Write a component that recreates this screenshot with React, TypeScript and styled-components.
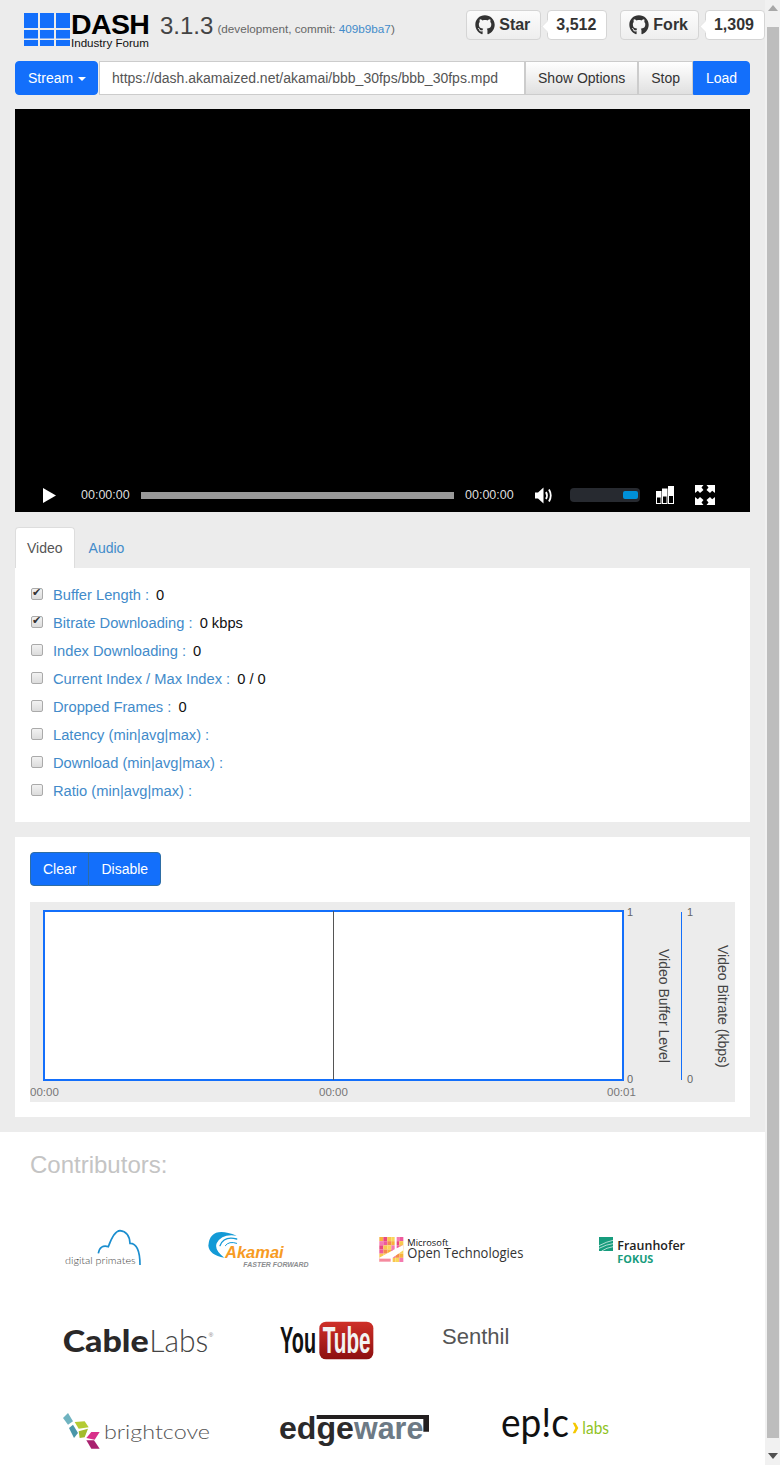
import React from "react";
import styled, { createGlobalStyle } from "styled-components";
import { FaGithub } from "react-icons/fa";

const COLOR_BLUE = "#136ffb";
const COLOR_LINK = "#428bca";
const COLOR_PAGE = "#ececec";

const METRICS = [
  { label: "Buffer Length :", value: "0", checked: true },
  { label: "Bitrate Downloading :", value: "0 kbps", checked: true },
  { label: "Index Downloading :", value: "0", checked: false },
  { label: "Current Index / Max Index :", value: "0 / 0", checked: false },
  { label: "Dropped Frames :", value: "0", checked: false },
  { label: "Latency (min|avg|max) :", value: "", checked: false },
  { label: "Download (min|avg|max) :", value: "", checked: false },
  { label: "Ratio (min|avg|max) :", value: "", checked: false },
];

// colours of the Microsoft mosaic, cells take them in turn
const MOSAIC = ["#f7b23c", "#ee5a9c", "#f9d65b", "#e8487f", "#f58a4e", "#f47ab0", "#f9c64e"];
const MOSAIC_CELLS = Array.from({ length: 36 }, (_, i) => i);

const App = () => {
  return (
    <>
      <GlobalStyle />
      <Screen>
        <Page>
          <Header>
            <LogoMark width="46" height="33" viewBox="0 0 46 33">
              {[0, 16, 32].map((x) => (
                <g key={x} fill={COLOR_BLUE}>
                  <rect x={x} y="0" width="14" height="15" />
                  <rect x={x} y="17" width="14" height="8.5" />
                  <rect x={x} y="27" width="14" height="6" />
                </g>
              ))}
            </LogoMark>
            <LogoText>
              <LogoTitle>DASH</LogoTitle>
              <LogoSub>Industry Forum</LogoSub>
            </LogoText>
            <Version>3.1.3</Version>
            <Commit>
              (development, commit: <a href="#commit">409b9ba7</a>)
            </Commit>
            <GithubGroup>
              <GithubButton>
                <FaGithub size={20} />
                Star
              </GithubButton>
              <GithubCount>3,512</GithubCount>
              <GithubButton $first={false}>
                <FaGithub size={20} />
                Fork
              </GithubButton>
              <GithubCount>1,309</GithubCount>
            </GithubGroup>
          </Header>

          <Toolbar>
            <PrimaryButton $side="left">
              Stream <Caret />
            </PrimaryButton>
            <UrlInput readOnly value="https://dash.akamaized.net/akamai/bbb_30fps/bbb_30fps.mpd" />
            <DefaultButton>Show Options</DefaultButton>
            <DefaultButton>Stop</DefaultButton>
            <PrimaryButton $side="right">Load</PrimaryButton>
          </Toolbar>

          <Video>
            <Controls>
              <PlayIcon width="13" height="15" viewBox="0 0 13 15">
                <path d="M0 0 L13 7.5 L0 15 Z" fill="#fff" />
              </PlayIcon>
              <Time>00:00:00</Time>
              <Seek />
              <Time $right>00:00:00</Time>
              <VolumeIcon width="18" height="17" viewBox="0 0 18 17">
                <path d="M0 5.5 H3 L8.5 0.5 V16.5 L3 11.5 H0 Z" fill="#fff" />
                <path d="M11 5 Q13 8.5 11 12" fill="none" stroke="#fff" strokeWidth="1.8" />
                <path d="M14 2.5 Q17.5 8.5 14 14.5" fill="none" stroke="#fff" strokeWidth="1.8" />
              </VolumeIcon>
              <VolumeTrack>
                <VolumeFill />
              </VolumeTrack>
              <BitrateIcon width="18" height="18" viewBox="0 0 18 18">
                <g fill="#000" stroke="#fff">
                  <rect x="0.5" y="5.5" width="4.5" height="12" />
                  <rect x="6.5" y="3" width="4.5" height="14.5" />
                  <rect x="12.5" y="0.5" width="5" height="17" />
                </g>
                <g fill="#fff">
                  <rect x="0.5" y="5.5" width="4.5" height="6" />
                  <rect x="6.5" y="3" width="4.5" height="7.5" />
                  <rect x="12.5" y="0.5" width="5" height="9.5" />
                </g>
              </BitrateIcon>
              <FullscreenIcon width="20" height="20" viewBox="0 0 20 20">
                <g fill="#fff">
                  <path d="M0 0 H8.5 L6.5 2.5 L8.5 5 L5 8 L2.8 5.8 L0 8 Z" />
                  <path d="M20 0 H11.5 L13.5 2.5 L11.5 5 L15 8 L17.2 5.8 L20 8 Z" />
                  <path d="M0 20 H8.5 L6.5 17.5 L8.5 15 L5 12 L2.8 14.2 L0 12 Z" />
                  <path d="M20 20 H11.5 L13.5 17.5 L11.5 15 L15 12 L17.2 14.2 L20 12 Z" />
                </g>
              </FullscreenIcon>
            </Controls>
          </Video>

          <Tabs>
            <Tab $active>Video</Tab>
            <Tab>Audio</Tab>
          </Tabs>
          <MetricsPanel>
            {METRICS.map((metric) => (
              <MetricRow key={metric.label}>
                <MetricCheck type="checkbox" defaultChecked={metric.checked} />
                <MetricLabel>{metric.label}</MetricLabel>
                {metric.value && <MetricValue>{metric.value}</MetricValue>}
              </MetricRow>
            ))}
          </MetricsPanel>

          <ChartPanel>
            <ButtonGroup>
              <GroupButton>Clear</GroupButton>
              <GroupButton>Disable</GroupButton>
            </ButtonGroup>
            <Chart width="705" height="200" viewBox="0 0 705 200">
              <rect x="14" y="9" width="579" height="169" fill="#fff" stroke={COLOR_BLUE} strokeWidth="2" />
              <line x1="303.5" y1="9" x2="303.5" y2="178" stroke="#555" />
              <line x1="651.5" y1="10" x2="651.5" y2="178" stroke={COLOR_BLUE} />
              <g fill="#666" fontSize="11">
                <text x="597" y="14">1</text>
                <text x="597" y="181">0</text>
                <text x="657" y="14">1</text>
                <text x="657" y="181">0</text>
              </g>
              <g fill="#777" fontSize="11.5">
                <text x="0" y="194">00:00</text>
                <text x="289" y="194">00:00</text>
                <text x="577" y="194">00:01</text>
              </g>
              <g fill="#444" fontSize="14">
                <text transform="translate(629 47) rotate(90)">Video Buffer Level</text>
                <text transform="translate(688 43) rotate(90)">Video Bitrate (kbps)</text>
              </g>
            </Chart>
          </ChartPanel>

          <Contributors>
            <ContributorsTitle>Contributors:</ContributorsTitle>
            <LogoRow $first>
              <LogoFrame $offset={60} width="90" height="47" viewBox="60 39 270 141">
                <path
                  d="M175 115 Q180 88 205 95 Q222 48 240 47 Q268 50 270 85 Q300 85 300 150"
                  fill="none"
                  stroke="#1b8ecf"
                  strokeWidth="5"
                />
                <text x="75" y="148" fontSize="31" fill="#444" fontFamily="Lato, sans-serif" fontWeight="300" textLength="212" lengthAdjust="spacingAndGlyphs">
                  digital primates
                </text>
              </LogoFrame>
              <LogoFrame $offset={55} width="110" height="47" viewBox="495 39 330 141">
                <path d="M590 62 Q510 30 505 92 Q508 120 553 128 Q522 105 530 85 Q545 55 590 62 Z" fill="#139ad6" />
                <g fill="none" stroke="#139ad6" strokeLinecap="round">
                  <path d="M590 72 Q552 62 540 92" strokeWidth="4" />
                  <path d="M590 85 Q567 77 556 92" strokeWidth="3" />
                </g>
                <text x="555" y="128" fontSize="48" fontWeight="700" fontStyle="italic" fill="#f79b23" textLength="176" lengthAdjust="spacingAndGlyphs">
                  Akamai
                </text>
                <text x="610" y="157" fontSize="23" fontWeight="700" fontStyle="italic" fill="#8b8d8f" textLength="196" lengthAdjust="spacingAndGlyphs">
                  FASTER FORWARD
                </text>
              </LogoFrame>
              <LogoFrame $offset={60} width="155" height="47" viewBox="45 39 465 141">
                {MOSAIC_CELLS.map((i) => (
                  <rect
                    key={i}
                    x={58 + (i % 6) * 12}
                    y={66 + Math.floor(i / 6) * 12.5}
                    width="12"
                    height="12.5"
                    fill={MOSAIC[(i * 3 + Math.floor(i / 6)) % MOSAIC.length]}
                  />
                ))}
                <path d="M58 128 L104 103 V66 H110 V100 L130 90 V106 L98 128 V141 H58 Z" fill="#fff" />
                <rect x="58" y="131" width="34" height="9" fill="#f58a9e" />
                <text x="142" y="92" fontSize="28" fontWeight="400" fill="#111" fontFamily="'Open Sans', sans-serif" textLength="123" lengthAdjust="spacingAndGlyphs">
                  Microsoft
                </text>
                <text x="142" y="130" fontSize="42" fill="#333" fontFamily="'Open Sans', sans-serif" textLength="348" lengthAdjust="spacingAndGlyphs">
                  Open Technologies
                </text>
              </LogoFrame>
              <LogoFrame $offset={65} width="95" height="47" viewBox="705 39 285 141">
                <rect x="717" y="66" width="42" height="42" fill="#179c7d" />
                <g fill="none" stroke="#fff" strokeWidth="2">
                  <path d="M717 92 Q740 80 759 76" />
                  <path d="M717 100 Q740 88 759 86" />
                  <path d="M725 108 Q740 98 759 95" />
                </g>
                <text x="772" y="106" fontSize="36" fontWeight="600" fill="#222" fontFamily="'Open Sans', sans-serif" textLength="203" lengthAdjust="spacingAndGlyphs">
                  Fraunhofer
                </text>
                <text x="772" y="143" fontSize="33" fontWeight="700" fill="#179c7d" fontFamily="'Open Sans', sans-serif" textLength="108" lengthAdjust="spacingAndGlyphs">
                  FOKUS
                </text>
              </LogoFrame>
            </LogoRow>
            <LogoRow>
              <LogoFrame $offset={60} width="160" height="47" viewBox="60 24 480 141">
                <text x="68" y="125" fontSize="92" fontWeight="900" fill="#2a2828" fontFamily="Lato, sans-serif" textLength="258" lengthAdjust="spacingAndGlyphs">
                  Cable
                </text>
                <text x="328" y="125" fontSize="92" fontWeight="300" fill="#444" fontFamily="Lato, sans-serif" textLength="177" lengthAdjust="spacingAndGlyphs">
                  Labs
                </text>
                <text x="506" y="82" fontSize="18" fill="#777">®</text>
              </LogoFrame>
              <LogoFrame $offset={55} width="105" height="47" viewBox="705 24 315 141">
                <defs>
                  <linearGradient id="ytRed" x1="0" y1="0" x2="0" y2="1">
                    <stop offset="0" stopColor="#cf3028" />
                    <stop offset="1" stopColor="#8c0f10" />
                  </linearGradient>
                </defs>
                <text x="720" y="130" fontSize="110" fontWeight="700" fill="#111" fontFamily="'Liberation Sans Narrow', 'Liberation Sans', sans-serif" textLength="108" lengthAdjust="spacingAndGlyphs">
                  You
                </text>
                <rect x="838" y="35" width="162" height="113" rx="20" fill="url(#ytRed)" />
                <text x="848" y="130" fontSize="110" fontWeight="700" fill="#f3f3f3" fontFamily="'Liberation Sans Narrow', 'Liberation Sans', sans-serif" textLength="144" lengthAdjust="spacingAndGlyphs">
                  Tube
                </text>
              </LogoFrame>
              <Senthil>Senthil</Senthil>
            </LogoRow>
            <LogoRow>
              <LogoFrame $offset={60} width="160" height="47" viewBox="60 294 480 141">
                <path d="M69 324 L84 309 L99 334 L84 344 Z" fill="#6fb3c0" />
                <path d="M87 354 L99 344 L114 369 L102 384 Z" fill="#4a96a9" />
                <path d="M104 336 L134 334 L146 352 L116 356 Z" fill="#b4cb33" />
                <path d="M116 364 L144 356 L134 382 L119 384 Z" fill="#a2bb2c" />
                <path d="M139 384 L154 366 H179 L164 389 Z" fill="#d8308a" />
                <path d="M139 391 H162 L179 416 H154 Z" fill="#a9216f" />
                <text x="192" y="388" fontSize="56" fontWeight="300" fill="#555" fontFamily="Lato, sans-serif" textLength="318" lengthAdjust="spacingAndGlyphs">
                  brightcove
                </text>
              </LogoFrame>
              <LogoFrame $offset={55} width="160" height="47" viewBox="705 294 480 141">
                <path d="M830 315 H1167 V365 H1150 V327 H830 Z" fill="#231f20" />
                <text x="717" y="388" fontSize="94" fontWeight="700" fill="#2b2a2b" textLength="225" lengthAdjust="spacingAndGlyphs">
                  edge
                </text>
                <text x="942" y="388" fontSize="94" fontWeight="700" fill="#6d7a85" textLength="208" lengthAdjust="spacingAndGlyphs">
                  ware
                </text>
              </LogoFrame>
              <LogoFrame $offset={60} width="120" height="47" viewBox="315 294 360 141">
                <text x="333" y="380" fontSize="120" fontWeight="400" fill="#111" fontFamily="Lato, sans-serif" textLength="204" lengthAdjust="spacingAndGlyphs">
                  ep!c
                </text>
                <path d="M548 338 H556 L565 354 L556 370 H548 L556 354 Z" fill="#f5c800" />
                <text x="577" y="372" fontSize="50" fontWeight="400" fill="#8fc31f" fontFamily="Lato, sans-serif" textLength="80" lengthAdjust="spacingAndGlyphs">
                  labs
                </text>
              </LogoFrame>
            </LogoRow>
          </Contributors>
        </Page>

        <Scrollbar>
          <ScrollArrow width="10" height="6" viewBox="0 0 10 6">
            <path d="M0 6 L5 0 L10 6 Z" fill="#a8a8a8" />
          </ScrollArrow>
          <ScrollThumb />
          <ScrollArrow width="10" height="6" viewBox="0 0 10 6">
            <path d="M0 0 L5 6 L10 0 Z" fill="#505050" />
          </ScrollArrow>
        </Scrollbar>
      </Screen>
    </>
  );
};

export default App;

/*//////////////////////////////////////////////////////////////////////////
/////////////////////////////// S T Y L E  /////////////////////////////////
//////////////////////////////////////////////////////////////////////////*/

const GlobalStyle = createGlobalStyle`
  html, body {
    margin: 0;
    padding: 0;
    overflow: hidden;
    background: ${COLOR_PAGE};
  }
  * {
    box-sizing: border-box;
  }
  body {
    font-family: "Liberation Sans", Arial, sans-serif;
  }
  a {
    color: ${COLOR_LINK};
    text-decoration: none;
  }
`;

const Screen = styled.div`
  display: flex;
  width: 780px;
  height: 1465px;
  overflow: hidden;
`;

const Page = styled.div`
  width: 765px;
  flex: none;
  font-size: 14px;
  line-height: 20px;
  color: #333;
`;

const Scrollbar = styled.div`
  width: 15px;
  flex: none;
  background: #f1f1f1;
  display: flex;
  flex-direction: column;
  align-items: center;
  justify-content: space-between;
  padding: 5px 0 6px;
`;

const ScrollThumb = styled.div`
  width: 12px;
  height: 1411px;
  margin-left: 1px;
  background: #bdbdbd;
`;

const ScrollArrow = styled.svg`
  display: block;
  margin-left: 1px;
`;

const Header = styled.div`
  display: flex;
  height: 61px;
  padding: 13px 0 0 24px;
`;

const LogoMark = styled.svg`
  display: block;
  flex: none;
`;

const LogoText = styled.div`
  flex: none;
  width: 80px;
  margin-left: 1px;
`;

const LogoTitle = styled.div`
  font-size: 28.5px;
  font-weight: 700;
  line-height: 22px;
  letter-spacing: -0.6px;
  color: #000;
`;

const LogoSub = styled.div`
  font-size: 11.6px;
  line-height: 14px;
  margin-top: 1px;
  color: #111;
  white-space: nowrap;
`;

const Version = styled.div`
  font-size: 24px;
  line-height: 26px;
  color: #444;
  margin-left: 9px;
`;

const Commit = styled.div`
  font-size: 11.7px;
  line-height: 16px;
  color: #666;
  margin: 8px 0 0 4px;
`;

const GithubGroup = styled.div`
  display: flex;
  margin: -3px 0 0 auto;
  height: 30px;
`;

const GithubButton = styled.div<{ $first?: boolean }>`
  display: flex;
  align-items: center;
  gap: 4px;
  padding: 0 10px 0 8px;
  margin-left: ${(p) => (p.$first === false ? "13px" : "0")};
  border: 1px solid #d5d5d5;
  border-radius: 4px;
  background: linear-gradient(#fcfcfc, #eeeeee);
  font-size: 16px;
  font-weight: 700;
  color: #333;
`;

const GithubCount = styled.div`
  position: relative;
  display: flex;
  align-items: center;
  justify-content: center;
  width: 60px;
  margin-left: 6px;
  padding-right: 2px;
  border: 1px solid #d5d5d5;
  border-radius: 4px;
  background: #fff;
  font-size: 16px;
  font-weight: 700;
  color: #333;

  &::before {
    content: "";
    position: absolute;
    left: -5px;
    top: 11px;
    width: 8px;
    height: 8px;
    transform: rotate(45deg);
    background: #fff;
    border-left: 1px solid #e4e4e4;
    border-bottom: 1px solid #e4e4e4;
  }
`;

const Toolbar = styled.div`
  display: flex;
  height: 34px;
  margin: 0 15px;
`;

const PrimaryButton = styled.button<{ $side: "left" | "right" }>`
  flex: none;
  height: 34px;
  padding: 0 12px;
  margin-right: ${(p) => (p.$side === "left" ? "1px" : "0")};
  width: ${(p) => (p.$side === "left" ? "83px" : "57px")};
  border: 1px solid ${COLOR_BLUE};
  border-radius: ${(p) => (p.$side === "left" ? "4px" : "0 4px 4px 0")};
  background: ${COLOR_BLUE};
  color: #fff;
  font: 14px "Liberation Sans", Arial, sans-serif;
  white-space: nowrap;
`;

const Caret = styled.span`
  display: inline-block;
  width: 0;
  height: 0;
  margin-left: 1px;
  vertical-align: middle;
  border-top: 4px solid #fff;
  border-left: 4px solid transparent;
  border-right: 4px solid transparent;
`;

const UrlInput = styled.input`
  flex: 1;
  min-width: 0;
  height: 34px;
  padding: 6px 12px;
  border: 1px solid #ccc;
  background: #fff;
  color: #555;
  font: 14px "Liberation Sans", Arial, sans-serif;
  outline: none;
`;

const DefaultButton = styled.button`
  flex: none;
  height: 34px;
  padding: 0 12px;
  border: 1px solid #ccc;
  background: linear-gradient(#ffffff, #e0e0e0);
  color: #333;
  font: 14px "Liberation Sans", Arial, sans-serif;
`;

const Video = styled.div`
  display: flex;
  align-items: flex-end;
  height: 403px;
  margin: 14px 15px 0;
  background: #000;
`;

const Controls = styled.div`
  display: flex;
  align-items: center;
  width: 100%;
  height: 34px;
  padding: 0 35px 0 28px;
`;

const PlayIcon = styled.svg`
  flex: none;
`;

const Time = styled.span<{ $right?: boolean }>`
  flex: none;
  width: 50px;
  margin-left: ${(p) => (p.$right ? "11px" : "25px")};
  font-size: 12.5px;
  color: #ddd;
`;

const Seek = styled.div`
  flex: 1;
  height: 7px;
  margin: 1px 0 0 10px;
  background: #999;
`;

const VolumeIcon = styled.svg`
  flex: none;
  margin-left: 20px;
`;

const VolumeTrack = styled.div`
  display: flex;
  justify-content: flex-end;
  align-items: center;
  flex: none;
  width: 70px;
  height: 14px;
  margin-left: 17px;
  padding-right: 2px;
  border-radius: 4px;
  background: #272a30;
`;

const VolumeFill = styled.div`
  width: 15px;
  height: 8px;
  border-radius: 2px;
  background: #0090d8;
`;

const BitrateIcon = styled.svg`
  flex: none;
  margin-left: 16px;
`;

const FullscreenIcon = styled.svg`
  flex: none;
  margin-left: 21px;
`;

const Tabs = styled.div`
  display: flex;
  height: 41px;
  margin: 15px 15px 0;
`;

const Tab = styled.div<{ $active?: boolean }>`
  padding: 10px 11px;
  margin-left: ${(p) => (p.$active ? "0" : "2px")};
  border: 1px solid ${(p) => (p.$active ? "#ddd" : "transparent")};
  border-bottom: 0;
  border-radius: 4px 4px 0 0;
  background: ${(p) => (p.$active ? "#fff" : "transparent")};
  color: ${(p) => (p.$active ? "#555" : COLOR_LINK)};
`;

const MetricsPanel = styled.div`
  height: 254px;
  margin: 0 15px;
  padding: 13px 16px;
  background: #fff;
`;

const MetricRow = styled.div`
  display: flex;
  align-items: center;
  height: 28px;
`;

const MetricCheck = styled.input`
  appearance: none;
  position: relative;
  flex: none;
  width: 12px;
  height: 12px;
  margin: -3px 10px 0 0;
  border: 1px solid #aaa;
  border-radius: 2px;
  background: linear-gradient(#f2f2f2, #dcdcdc);

  &:checked::after {
    content: "✔";
    position: absolute;
    left: 0;
    top: -4px;
    font-size: 11px;
    line-height: 16px;
    color: #333;
    font-family: "DejaVu Sans", sans-serif;
  }
`;

const MetricLabel = styled.span`
  color: ${COLOR_LINK};
  font-size: 14.7px;
`;

const MetricValue = styled.span`
  margin-left: 7px;
  color: #111;
  font-size: 14.7px;
`;

const ChartPanel = styled.div`
  height: 280px;
  margin: 15px 15px 0;
  padding: 15px;
  background: #fff;
`;

const ButtonGroup = styled.div`
  display: flex;
`;

const GroupButton = styled.button`
  height: 34px;
  padding: 0 12px;
  border: 1px solid #2e6da4;
  background: ${COLOR_BLUE};
  color: #fff;
  font: 14px "Liberation Sans", Arial, sans-serif;

  &:first-child {
    border-radius: 4px 0 0 4px;
  }
  &:last-child {
    margin-left: -1px;
    border-radius: 0 4px 4px 0;
  }
`;

const Chart = styled.svg`
  display: block;
  margin-top: 16px;
  background: ${COLOR_PAGE};
`;

const Contributors = styled.div`
  height: 333px;
  margin-top: 15px;
  padding-top: 20px;
  background: #fff;
`;

const ContributorsTitle = styled.div`
  padding-left: 30px;
  font-size: 24px;
  line-height: 26px;
  color: #c4c4c4;
`;

const LogoRow = styled.div<{ $first?: boolean }>`
  display: flex;
  align-items: flex-start;
  height: 90px;
  margin-top: ${(p) => (p.$first ? "50px" : "0")};
`;

const LogoFrame = styled.svg<{ $offset: number }>`
  display: block;
  flex: none;
  margin-left: ${(p) => p.$offset}px;
`;

const Senthil = styled.div`
  margin: 6px 0 0 62px;
  font-size: 22px;
  line-height: 26px;
  color: #555;
`;
